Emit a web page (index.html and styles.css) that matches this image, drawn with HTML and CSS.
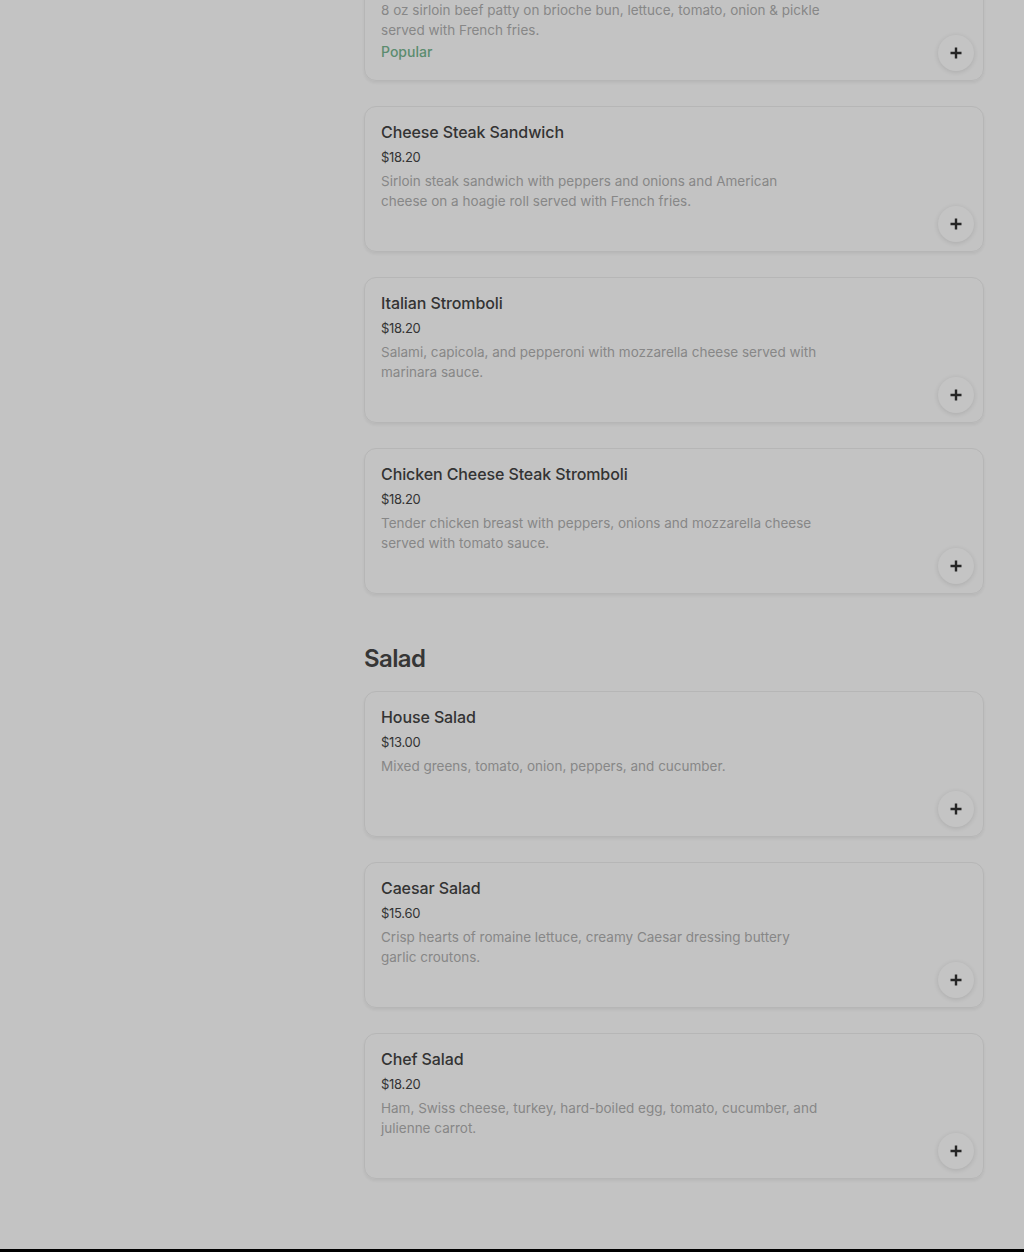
FILE: index.html
```html
<!DOCTYPE html>
<html>
<head>
<meta charset="utf-8">
<link rel="stylesheet" href="styles.css">
</head>
<body>
<div class="page">
  <aside class="side"></aside>
  <main class="main">
    <section class="section first">
      <div class="card">
        <div class="info">
          <div class="title">Bacon Cheeseburger</div>
          <div class="price">$17.50</div>
          <div class="desc">8 oz sirloin beef patty on brioche bun, lettuce, tomato, onion &amp; pickle served with French fries.</div>
          <div class="tag">Popular</div>
        </div>
        <button class="add"><svg viewBox="0 0 12 12" width="12" height="12"><path d="M6 0.5v11M0.5 6h11" stroke="#262626" stroke-width="2.4"/></svg></button>
      </div>
      <div class="card">
        <div class="info">
          <div class="title">Cheese Steak Sandwich</div>
          <div class="price">$18.20</div>
          <div class="desc">Sirloin steak sandwich with peppers and onions and American cheese on a hoagie roll served with French fries.</div>
        </div>
        <button class="add"><svg viewBox="0 0 12 12" width="12" height="12"><path d="M6 0.5v11M0.5 6h11" stroke="#262626" stroke-width="2.4"/></svg></button>
      </div>
      <div class="card">
        <div class="info">
          <div class="title">Italian Stromboli</div>
          <div class="price">$18.20</div>
          <div class="desc">Salami, capicola, and pepperoni with mozzarella cheese served with marinara sauce.</div>
        </div>
        <button class="add"><svg viewBox="0 0 12 12" width="12" height="12"><path d="M6 0.5v11M0.5 6h11" stroke="#262626" stroke-width="2.4"/></svg></button>
      </div>
      <div class="card">
        <div class="info">
          <div class="title">Chicken Cheese Steak Stromboli</div>
          <div class="price">$18.20</div>
          <div class="desc">Tender chicken breast with peppers, onions and mozzarella cheese served with tomato sauce.</div>
        </div>
        <button class="add"><svg viewBox="0 0 12 12" width="12" height="12"><path d="M6 0.5v11M0.5 6h11" stroke="#262626" stroke-width="2.4"/></svg></button>
      </div>
    </section>
    <section class="section">
      <h2 class="heading">Salad</h2>
      <div class="card">
        <div class="info">
          <div class="title">House Salad</div>
          <div class="price">$13.00</div>
          <div class="desc">Mixed greens, tomato, onion, peppers, and cucumber.</div>
        </div>
        <button class="add"><svg viewBox="0 0 12 12" width="12" height="12"><path d="M6 0.5v11M0.5 6h11" stroke="#262626" stroke-width="2.4"/></svg></button>
      </div>
      <div class="card">
        <div class="info">
          <div class="title">Caesar Salad</div>
          <div class="price">$15.60</div>
          <div class="desc">Crisp hearts of romaine lettuce, creamy Caesar dressing buttery garlic croutons.</div>
        </div>
        <button class="add"><svg viewBox="0 0 12 12" width="12" height="12"><path d="M6 0.5v11M0.5 6h11" stroke="#262626" stroke-width="2.4"/></svg></button>
      </div>
      <div class="card">
        <div class="info">
          <div class="title">Chef Salad</div>
          <div class="price">$18.20</div>
          <div class="desc">Ham, Swiss cheese, turkey, hard-boiled egg, tomato, cucumber, and julienne carrot.</div>
        </div>
        <button class="add"><svg viewBox="0 0 12 12" width="12" height="12"><path d="M6 0.5v11M0.5 6h11" stroke="#262626" stroke-width="2.4"/></svg></button>
      </div>
    </section>
  </main>
</div>
<footer class="footer"></footer>
</body>
</html>
```
FILE: styles.css
```css
html, body {
  margin: 0;
  padding: 0;
  background: #c3c3c3;
  font-family: Inter, "Noto Sans", sans-serif;
  color: #333;
}
.page {
  display: grid;
  grid-template-columns: 364px 620px;
  margin-top: -65px;
  padding-bottom: 70px;
}
.section {
  display: flex;
  flex-direction: column;
  gap: 25px;
}
.section.first {
  margin-bottom: 50px;
}
.heading {
  margin: 0 0 -8px 0;
  font-size: 24px;
  line-height: 30px;
  font-weight: 600;
  color: #363636;
  letter-spacing: -0.6px;
}
.card {
  box-sizing: border-box;
  height: 146px;
  border: 1px solid #b6b6b6;
  border-radius: 12px;
  box-shadow: 0 2px 3px rgba(0,0,0,0.06);
  padding: 13px 9px 9px 16px;
  display: flex;
  justify-content: space-between;
  align-items: flex-end;
}
.info {
  align-self: flex-start;
  max-width: 439px;
}
.title {
  font-size: 16px;
  line-height: 24px;
  font-weight: 500;
  color: #333;
  letter-spacing: -0.1px;
}
.price {
  margin-top: 3px;
  font-size: 13px;
  line-height: 20px;
  color: #333;
  letter-spacing: -0.3px;
}
.desc {
  margin-top: 4px;
  font-size: 13.5px;
  line-height: 20px;
  color: #878787;
  letter-spacing: 0;
}
.tag {
  margin-top: 2px;
  font-size: 14px;
  line-height: 20px;
  font-weight: 500;
  color: #5b8c6f;
}
.add {
  width: 36px;
  height: 36px;
  border-radius: 50%;
  border: none;
  background: #c4c4c4;
  box-shadow: 0 1px 5px rgba(0,0,0,0.12);
  display: flex;
  align-items: center;
  justify-content: center;
  padding: 0;
  flex: none;
}
.footer {
  height: 4px;
  background: #000;
}
```
